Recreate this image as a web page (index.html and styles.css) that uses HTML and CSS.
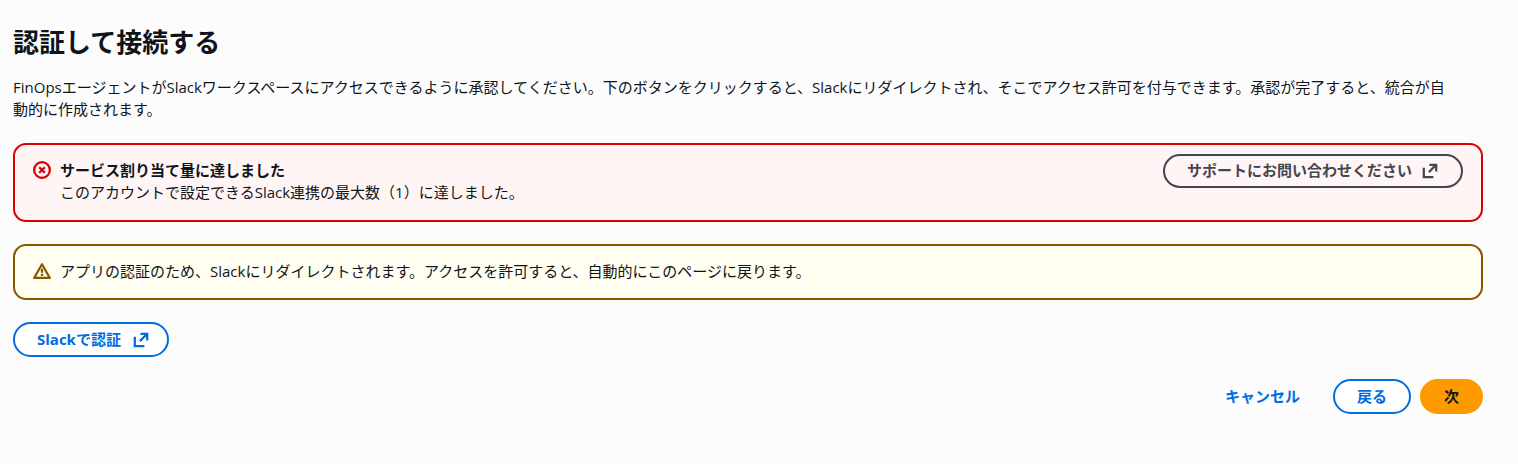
FILE: index.html
```html
<!DOCTYPE html>
<html lang="ja">

<head>
    <meta charset="UTF-8">
    <meta name="viewport" content="width=device-width, initial-scale=1.0">
    <title>認証して接続する</title>
    <link rel="stylesheet" href="styles.css">
</head>

<body>
    <main class="page">
        <header class="intro">
            <h1>認証して接続する</h1>
            <p>FinOpsエージェントがSlackワークスペースにアクセスできるように承認してください。下のボタンをクリックすると、Slackにリダイレクトされ、そこでアクセス許可を付与できます。承認が完了すると、統合が自動的に作成されます。</p>
        </header>

        <section class="alert alert-error" role="alert">
            <svg class="icon" viewBox="0 0 16 16" aria-hidden="true">
                <circle cx="8" cy="8" r="7" />
                <path d="M5.5 5.5l5 5M10.5 5.5l-5 5" />
            </svg>
            <div class="alert-text">
                <strong>サービス割り当て量に達しました</strong>
                <p>このアカウントで設定できるSlack連携の最大数（1）に達しました。</p>
            </div>
            <a class="btn btn-support" href="#support">サポートにお問い合わせください
                <svg class="icon" viewBox="0 0 16 16" aria-hidden="true">
                    <path class="miter" d="M7.5 2.5h6v6M13.5 2.5L7 9M2.5 5v8.5H11" />
                </svg>
            </a>
        </section>

        <section class="alert alert-warning">
            <svg class="icon" viewBox="0 0 16 16" aria-hidden="true">
                <path d="M8 2L15 14.2H1z" />
                <path d="M8 6v3.5M8 10.5v2" />
            </svg>
            <div class="alert-text">
                <p>アプリの認証のため、Slackにリダイレクトされます。アクセスを許可すると、自動的にこのページに戻ります。</p>
            </div>
        </section>

        <div class="auth">
            <button type="button" class="btn btn-auth">Slackで認証
                <svg class="icon" viewBox="0 0 16 16" aria-hidden="true">
                    <path class="miter" d="M7.5 2.5h6v6M13.5 2.5L7 9M2.5 5v8.5H11" />
                </svg>
            </button>
        </div>

        <footer class="actions">
            <button type="button" class="btn btn-link">キャンセル</button>
            <button type="button" class="btn">戻る</button>
            <button type="button" class="btn btn-primary">次</button>
        </footer>
    </main>
</body>

</html>
```
FILE: styles.css
```css
* {
    box-sizing: border-box;
}

body {
    margin: 0;
    background-color: #fcfcfd;
    color: #0f141a;
    font-family: "Open Sans", "Noto Sans CJK JP", sans-serif;
    font-size: 15px;
    line-height: 22px;
}

h1,
p {
    margin: 0;
}

.page {
    display: flex;
    flex-direction: column;
    gap: 22px;
    padding: 25px 35px 50px 13px;
}

.intro h1 {
    margin-bottom: 17px;
    font-size: 26px;
    line-height: 34px;
}

.intro p {
    padding: 0 28px 1px 0;
}

.icon {
    flex: none;
    width: 18px;
    height: 18px;
    fill: none;
    stroke: currentColor;
    stroke-width: 2;
    stroke-linejoin: round;
}

.icon .miter {
    stroke-linejoin: miter;
}

/* アラート */
.alert {
    display: flex;
    align-items: flex-start;
    gap: 9px;
    padding: 14px 18px 16px 18px;
    border: 2px solid;
    border-radius: 13px;
}

.alert > .icon {
    margin-top: 2px;
}

.alert-text {
    flex: 1;
    color: #0f141a;
}

.alert-text strong {
    display: block;
}

.alert-error {
    padding-bottom: 17px;
    border-color: #db0000;
    background-color: #fff5f5;
    color: #db0000;
}

.alert-warning {
    border-color: #855900;
    background-color: #fffef0;
    color: #855900;
}

/* ボタン */
.btn {
    display: inline-flex;
    align-items: center;
    justify-content: center;
    gap: 9px;
    height: 35px;
    padding: 0 22px 2px;
    border: 2px solid #006ce0;
    border-radius: 22px;
    background-color: #ffffff;
    color: #006ce0;
    font: inherit;
    font-weight: 700;
    text-decoration: none;
    white-space: nowrap;
    cursor: pointer;
}

.btn .icon {
    margin-top: 2px;
}

.btn-support {
    height: 34px;
    margin: -5px 0;
    border-color: #424650;
    background-color: transparent;
    color: #424650;
}

.btn-auth {
    gap: 11px;
    padding-right: 17px;
}

.btn-link {
    border-color: transparent;
    background-color: transparent;
}

.btn-primary {
    border-color: #ff9900;
    background-color: #ff9900;
    color: #0f141a;
}

.auth {
    display: flex;
}

.actions {
    display: flex;
    justify-content: flex-end;
    gap: 9px;
}
```
